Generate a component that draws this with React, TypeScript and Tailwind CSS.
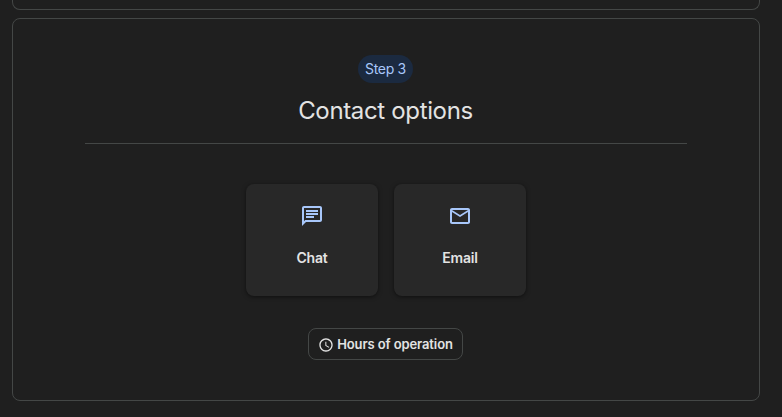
const font = "font-['Inter','Roboto',sans-serif]";

function ChatIcon() {
  return (
    <svg width="24" height="24" viewBox="0 0 24 24" fill="#a8c7fa">
      <path d="M20 2H4c-1.1 0-2 .9-2 2v18l4-4h14c1.1 0 2-.9 2-2V4c0-1.1-.9-2-2-2zm0 14H5.17L4 17.17V4h16v12z" />
      <path d="M6 12h8v2H6zM6 9h12v2H6zM6 6h12v2H6z" />
    </svg>
  );
}

function MailIcon() {
  return (
    <svg width="24" height="24" viewBox="0 0 24 24" fill="#a8c7fa">
      <path d="M20 4H4c-1.1 0-1.99.9-1.99 2L2 18c0 1.1.9 2 2 2h16c1.1 0 2-.9 2-2V6c0-1.1-.9-2-2-2zm0 14H4V8l8 5 8-5v10zm-8-7L4 6h16l-8 5z" />
    </svg>
  );
}

function ClockIcon() {
  return (
    <svg width="16" height="16" viewBox="0 0 24 24" fill="#e3e3e3">
      <path d="M11.99 2C6.47 2 2 6.48 2 12s4.47 10 9.99 10C17.52 22 22 17.52 22 12S17.52 2 11.99 2zM12 20c-4.42 0-8-3.58-8-8s3.58-8 8-8 8 3.58 8 8-3.58 8-8 8z" />
      <path d="M12.5 7H11v6l5.25 3.15.75-1.23-4.5-2.67z" />
    </svg>
  );
}

function OptionCard({ label, icon }: { label: string; icon: React.ReactNode }) {
  return (
    <div className="flex h-[112px] w-[132px] flex-col items-center rounded-lg bg-[#282828] pt-5 shadow-[0_1px_4px_rgba(0,0,0,0.5)]">
      {icon}
      <span className="mt-5 text-sm leading-5 font-semibold tracking-[-0.2px] text-[#e3e3e3]">{label}</span>
    </div>
  );
}

export default function App() {
  return (
    <div className={`flex h-[417px] w-full flex-col gap-2 overflow-hidden bg-[#1f1f1f] pr-[22px] pl-3 ${font}`}>
      <div className="h-[10px] shrink-0 rounded-b-lg border-x border-b border-[#444746]" />
      <section className="flex h-[383px] shrink-0 flex-col items-center rounded-lg border border-[#444746] pt-9">
        <span className="mr-px flex h-7 w-[55px] items-center justify-center rounded-full bg-[#1b2a40] text-sm tracking-[-0.3px] text-[#a8c7fa]">
          Step 3
        </span>
        <h2 className="mt-3 mr-px text-2xl leading-8 font-normal tracking-[-0.35px] text-[#e3e3e3]">Contact options</h2>
        <div className="mt-4 h-px w-[602px] bg-[#444746]" />
        <div className="mt-10 flex gap-4">
          <OptionCard label="Chat" icon={<ChatIcon />} />
          <OptionCard label="Email" icon={<MailIcon />} />
        </div>
        <button className="mt-8 mr-px flex h-8 w-[155px] items-center justify-center gap-[3px] rounded-lg border border-[#444746] pt-0.5 text-[13px] font-semibold tracking-[-0.1px] text-[#e3e3e3]">
          <ClockIcon />
          Hours of operation
        </button>
      </section>
    </div>
  );
}
